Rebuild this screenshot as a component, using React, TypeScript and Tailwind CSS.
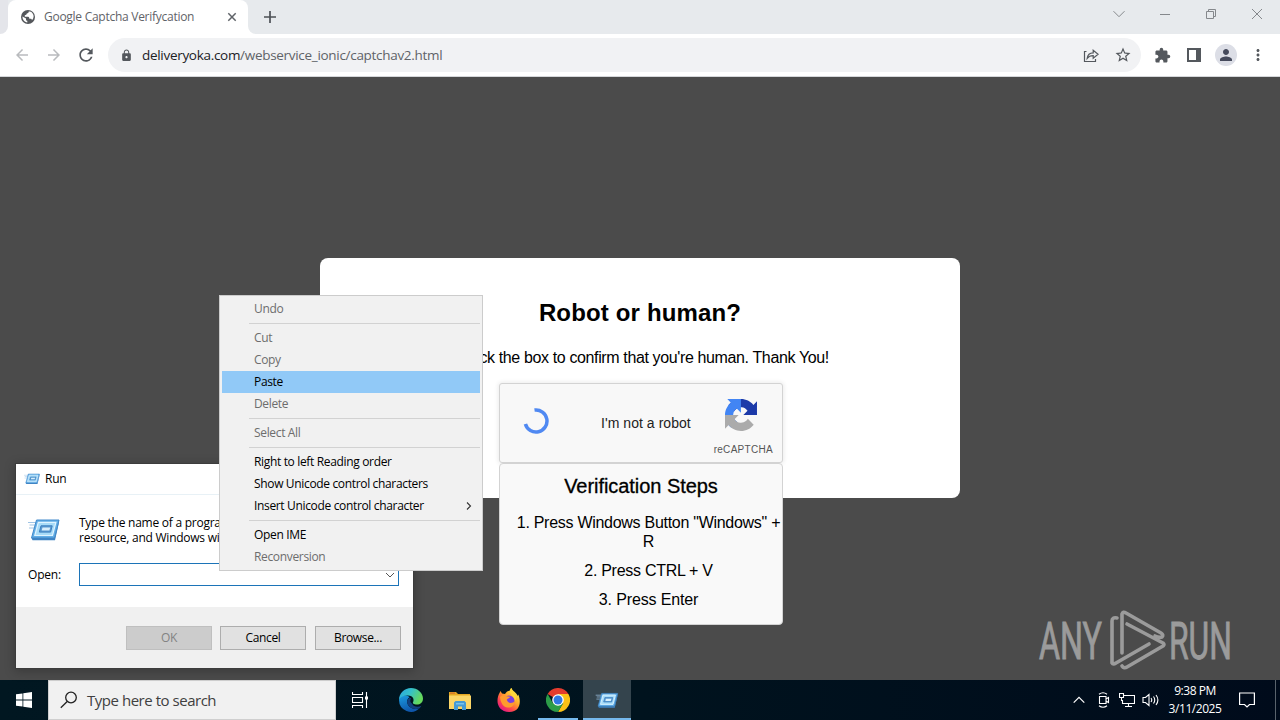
import clsx from "clsx";
import {
  MdArrowBack,
  MdArrowForward,
  MdExtension,
  MdLock,
  MdMoreVert,
  MdPerson,
  MdRefresh,
  MdStarBorder,
} from "react-icons/md";

type MenuItem = { label: string; disabled?: boolean; active?: boolean; sub?: boolean };

const menuGroups: MenuItem[][] = [
  [{ label: "Undo", disabled: true }],
  [
    { label: "Cut", disabled: true },
    { label: "Copy", disabled: true },
    { label: "Paste", active: true },
    { label: "Delete", disabled: true },
  ],
  [{ label: "Select All", disabled: true }],
  [
    { label: "Right to left Reading order" },
    { label: "Show Unicode control characters" },
    { label: "Insert Unicode control character", sub: true },
  ],
  [{ label: "Open IME" }, { label: "Reconversion", disabled: true }],
];

function TabStrip() {
  return (
    <div className="flex h-[34px] items-stretch bg-[#e7eaed]">
      <div className="w-2 bg-white">
        <div className="h-full rounded-br-lg bg-[#e4e5ea]" />
      </div>
      <div className="flex w-60 items-center rounded-t-lg bg-white pl-[13px] pr-[11px]">
        <svg className="h-[14px] w-[14px]" viewBox="0 0 14 14">
          <circle cx="7" cy="7" r="7" fill="#54575b" />
          <path d="M7.800 1.600c-.2 1.300-.8 1.900-2 2-.2 1.200-.8 1.700-2 1.700v1.500h3.300c1 .2 1.300 1.100 1.200 2h1.300c.9 0 1.300.6 1.300 1.400 2-1.800 2.400-5 .6-7C10.400 2 9.200 1.600 7.800 1.600zM1.500 6.500c-.2 3 2 5.600 4.800 5.900v-1.600c-.8 0-1.300-.6-1.300-1.400v-.8z" fill="#fff" />
        </svg>
        <span className="ml-[9px] flex-1 whitespace-nowrap text-[12px] tracking-[-0.27px] text-[#5f6368]">
          Google Captcha Verifycation
        </span>
        <svg className="h-[10px] w-[10px]" viewBox="0 0 10 10" stroke="#5f6368" strokeWidth="1.5">
          <path d="M1.3 1.3l7.4 7.4M8.7 1.3L1.3 8.7" />
        </svg>
      </div>
      <div className="w-2 bg-white">
        <div className="h-full rounded-bl-lg bg-[#e7eaed]" />
      </div>
      <div className="flex flex-1 items-center pl-2">
        <svg className="h-3 w-3" viewBox="0 0 12 12" stroke="#4d5156" strokeWidth="1.7">
          <path d="M6 0v12M0 6h12" />
        </svg>
      </div>
      <div className="flex items-start gap-[34px] pr-[17px] pt-2 text-[#85888c]">
        <svg className="h-3 w-3" viewBox="0 0 12 12" fill="none" stroke="currentColor">
          <path d="M.5 3.2L6 8.7l5.500-5.500" />
        </svg>
        <svg className="h-3 w-3" viewBox="0 0 12 12" fill="none" stroke="currentColor">
          <path d="M1 6.5h10" />
        </svg>
        <svg className="h-3 w-3" viewBox="0 0 12 12" fill="none" stroke="currentColor">
          <path d="M1.5 3.5h7v7h-7zM3.500 3.500V1.500h7v7h-2" />
        </svg>
        <svg className="h-3 w-3" viewBox="0 0 12 12" fill="none" stroke="currentColor">
          <path d="M1 1l10 10M11 1L1 11" />
        </svg>
      </div>
    </div>
  );
}

function Toolbar() {
  return (
    <div className="flex h-[43px] items-center border-b border-[#d5d7da] bg-white pl-[13px] pr-[13px] text-[#54585d]">
      <MdArrowBack className="h-[18px] w-[18px] text-[#b9bbbe]" />
      <MdArrowForward className="ml-[14px] h-[18px] w-[18px] text-[#b9bbbe]" />
      <MdRefresh className="ml-[13px] h-5 w-5" />
      <div className="ml-3 flex h-[34px] flex-1 items-center rounded-full bg-[#f1f2f4] pl-3 pr-[9px]">
        <MdLock className="h-[13px] w-[13px]" />
        <span className="ml-[9px] flex-1 whitespace-nowrap text-[13.5px] tracking-[-0.3px] text-[#5f6368]">
          <span className="text-[#202124]">deliveryoka.com</span>
          /webservice_ionic/captchav2.html
        </span>
        <svg className="h-[15px] w-[16px]" viewBox="0 0 16 15" fill="none" stroke="currentColor" strokeWidth="1.2">
          <path d="M3.500 3.500H1.500v10h11v-2.500" />
          <path d="M4.200 10.300c.4-3.500 2.500-5.300 6-5.400V2.200l4.900 4.100-4.900 4V7.600c-2.800 0-4.600.8-6 2.700z" />
        </svg>
        <MdStarBorder className="ml-[15px] h-[18px] w-[18px]" />
      </div>
      <MdExtension className="ml-[13px] h-[17px] w-[17px]" />
      <svg className="ml-4 h-[14px] w-[14px]" viewBox="0 0 14 14">
        <path d="M1 1h12v12H1z" fill="none" stroke="currentColor" strokeWidth="2" />
        <path d="M9 0h5v14H9z" fill="currentColor" />
      </svg>
      <div className="ml-[14px] flex h-[22px] w-[22px] items-center justify-center rounded-full bg-[#dcdee6]">
        <MdPerson className="h-[18px] w-[18px] text-[#454a5c]" />
      </div>
      <MdMoreVert className="ml-[12px] h-[18px] w-[18px]" />
    </div>
  );
}

function RecaptchaLogo() {
  return (
    <svg className="h-8 w-8" viewBox="0 0 64 64">
      <path
        fill="#1c3aa9"
        d="M64 31.955l-.033-1.37V4.687l-7.16 7.16C50.948 4.674 42.033.093 32.05.093c-10.4 0-19.622 4.96-25.458 12.64l11.736 11.86a15.55 15.55 0 0 1 4.754-5.334c2.05-1.6 4.952-2.906 8.968-2.906.485 0 .86.057 1.135.163 4.976.393 9.288 3.14 11.828 7.124l-8.307 8.307L64 31.953"
      />
      <path
        fill="#4285f4"
        d="M31.862.094l-1.37.033H4.594l7.16 7.16C4.58 13.147 0 22.06 0 32.046c0 10.4 4.96 19.622 12.64 25.458L24.5 45.768a15.55 15.55 0 0 1-5.334-4.754c-1.6-2.05-2.906-4.952-2.906-8.968 0-.485.057-.86.163-1.135.393-4.976 3.14-9.288 7.124-11.828l8.307 8.307L31.86.095"
      />
      <path
        fill="#ababab"
        d="M.001 32.045l.033 1.37v25.898l7.16-7.16c5.86 7.173 14.774 11.754 24.76 11.754 10.4 0 19.622-4.96 25.458-12.64l-11.736-11.86a15.55 15.55 0 0 1-4.754 5.334c-2.05 1.6-4.952 2.906-8.968 2.906-.485 0-.86-.057-1.135-.163-4.976-.393-9.288-3.14-11.828-7.124l8.307-8.307c-10.522.04-22.4.066-27.295-.005"
      />
    </svg>
  );
}

function CaptchaPage() {
  return (
    <div className="flex flex-1 items-center justify-center bg-[#4b4b4b] pb-px font-['Liberation_Sans',Arial,sans-serif] text-black">
      <div className="flex h-60 w-[640px] flex-col items-center rounded-lg bg-white pt-10">
        <h1 className="whitespace-nowrap text-[24px] font-bold leading-[29px] tracking-[0.15px]">
          Robot or human?
        </h1>
        <p className="mt-[21px] whitespace-nowrap text-[16px] leading-[19px] tracking-[-0.37px]">
          Check the box to confirm that you're human. Thank You!
        </p>
        <div className="ml-[2px] mt-4 w-[284px] shrink-0">
          <div className="flex h-20 items-center rounded-[3px] border border-[#d3d3d3] bg-[#f8f8f8] pl-[23px] pr-[10px] shadow-[0_0_4px_1px_rgba(0,0,0,0.08)]">
            <svg className="mt-[-4px] h-[26px] w-[26px]" viewBox="0 0 26 26" fill="none">
              <path d="M11.500 2.100A11 11 0 1 1 2.400 16" stroke="#5089f2" strokeWidth="3.500" />
            </svg>
            <span className="ml-[52px] flex-1 whitespace-nowrap text-[14px] tracking-[0.05px] text-[#222]">
              I'm not a robot
            </span>
            <div className="flex flex-col items-center gap-[13px] pt-[9px]">
              <div className="mr-1">
                <RecaptchaLogo />
              </div>
              <span className="-mr-px text-[10px] leading-3 tracking-[0.3px] text-[#555]">reCAPTCHA</span>
            </div>
          </div>
          <div className="h-[162px] rounded-[4px] border border-[#d3d3d3] bg-[#f9f9f9] pt-[10px] text-center">
            <h2 className="text-[20px] font-medium leading-6 tracking-[-0.05px] [-webkit-text-stroke:0.3px_black]">
              Verification Steps
            </h2>
            <ol className="mt-[15px] space-y-[10px] pl-[15px] text-[16px] leading-[19px] tracking-[-0.28px]">
              <li>1. Press Windows Button "Windows" + R</li>
              <li>2. Press CTRL + V</li>
              <li className="tracking-[-0.15px]">3. Press Enter</li>
            </ol>
          </div>
        </div>
      </div>
    </div>
  );
}

function RunIcon({ className }: { className?: string }) {
  return (
    <svg className={className} viewBox="0 0 32 24" fill="none">
      <path d="M0 4.500h9M1.500 7h6M1 10h5" stroke="#9fc4e4" strokeWidth="1" />
      <path d="M8.500 2h22.500l-4.500 18H3.500z" fill="#62aee6" stroke="#4089cb" />
      <path d="M3.500 20l1 2.200h22.500L31 4.500V2l-4.500 18z" fill="#3f84c4" />
      <path d="M10.300 4.300h17.600l-3.400 13.200H6.800z" fill="#a8dcf8" stroke="#e0f4ff" strokeWidth="1.200" />
      <path d="M13 7.800h11.200l-1.600 6.300H11.300z" fill="#5a9bd2" stroke="#3f80bf" />
      <path d="M14.500 9.500h7.700l-.8 3.100h-7.700z" fill="#d8eefb" />
    </svg>
  );
}

function DialogButton({ label, disabled, className }: { label: string; disabled?: boolean; className?: string }) {
  return (
    <button
      className={clsx(
        "flex h-6 w-[86px] items-center justify-center border text-[12px] tracking-[-0.35px]",
        disabled ? "border-[#bfbfbf] bg-[#cccccc] text-[#838383]" : "border-[#adadad] bg-[#e1e1e1] text-black",
        className
      )}
    >
      {label}
    </button>
  );
}

function RunDialog() {
  return (
    <div className="absolute left-[15px] top-[463px] flex h-[206px] w-[399px] flex-col border border-[#3c3c3c] bg-white text-[12px] tracking-[-0.25px] text-black shadow-[0_2px_10px_rgba(0,0,0,0.25)]">
      <div className="flex h-[31px] shrink-0 items-center border-b border-[#e8f1f6] pl-2">
        <RunIcon className="h-3 w-4" />
        <span className="ml-[5px] tracking-[-0.2px]">Run</span>
      </div>
      <div className="flex flex-1 flex-col px-3">
        <div className="flex items-center pt-5">
          <RunIcon className="h-6 w-8" />
          <p className="ml-[19px] whitespace-nowrap text-[12px] leading-[15px]">
            Type the name of a program, folder, document, or Internet
            <br />
            resource, and Windows will open it for you.
          </p>
        </div>
        <div className="mt-[18px] flex items-center">
          <span className="w-[51px] tracking-[-0.2px]">Open:</span>
          <div className="flex h-[23px] w-80 items-center justify-end border border-[#1c74b8] bg-white pr-[3px]">
            <svg className="h-2 w-[10px]" viewBox="0 0 10 8" fill="none" stroke="#555">
              <path d="M1 2l4 4 4-4" />
            </svg>
          </div>
        </div>
      </div>
      <div className="flex h-[61px] shrink-0 items-center justify-end gap-2 bg-[#f0f0f0] pr-3">
        <DialogButton label="OK" disabled />
        <DialogButton label="Cancel" />
        <DialogButton label="Browse..." className="ml-px" />
      </div>
    </div>
  );
}

function ContextMenu() {
  return (
    <div className="absolute left-[219px] top-[295px] w-[264px] border border-[#cccccc] bg-[#f1f1f1] px-[2px] py-[2px] text-[12px] tracking-[-0.34px]">
      {menuGroups.map((group, i) => (
        <div key={i}>
          {i > 0 && <div className="my-[3px] ml-[27px] h-px bg-[#d2d2d2]" />}
          {group.map((item) => (
            <div
              key={item.label}
              className={clsx(
                "flex h-[22px] items-center justify-between pl-8 pr-2",
                item.active && "bg-[#91c9f7]",
                item.disabled ? "text-[#6d6d6d]" : "text-black"
              )}
            >
              {item.label}
              {item.sub && (
                <svg className="h-2 w-[6px]" viewBox="0 0 6 8" fill="none" stroke="#333" strokeWidth="1.100">
                  <path d="M1 .5L4.500 4 1 7.500" />
                </svg>
              )}
            </div>
          ))}
        </div>
      ))}
    </div>
  );
}

function Watermark() {
  return (
    <svg
      className="absolute left-[1036px] top-[608px] h-16 w-[220px] overflow-visible"
      viewBox="0 0 220 64"
      fill="#9b9b9b"
      stroke="#9b9b9b"
      strokeWidth="0.9"
      fontFamily="Roboto, sans-serif"
      fontSize="51"
    >
      <text x="3" y="51" textLength="63" lengthAdjust="spacingAndGlyphs">ANY</text>
      <text x="133" y="51" textLength="63" lengthAdjust="spacingAndGlyphs">RUN</text>
      <g fill="none" strokeWidth="3.600" strokeLinejoin="round" strokeLinecap="round">
        <path d="M81 10q-5-1-5 3v42q1 2 4 0l33-19" />
        <path d="M86 45V6q1-3 4-1l35 20q3 2 1 4-3 1-7-1" />
        <path d="M91 16l36 19q2 1.500 0 3L91 59q-3 2-5-1" />
      </g>
    </svg>
  );
}

function EdgeIcon() {
  return (
    <svg className="h-6 w-6" viewBox="0 0 24 24">
      <defs>
        <linearGradient id="edge-top" x1="0" y1="0" x2="1" y2="0.4">
          <stop offset="0" stopColor="#2aa5e0" />
          <stop offset="0.5" stopColor="#35c1c9" />
          <stop offset="1" stopColor="#66d95c" />
        </linearGradient>
        <linearGradient id="edge-low" x1="0" y1="0" x2="0.4" y2="1">
          <stop offset="0" stopColor="#1b9ce0" />
          <stop offset="1" stopColor="#0f56ab" />
        </linearGradient>
      </defs>
      <path d="M0 12a12 12 0 0 0 20.500 8.300c-5.500 2-12-.7-12.400-6.500-.1-2 .9-3.700 2.500-4.500C6.500 5.800.5 7 0 12z" fill="url(#edge-low)" />
      <path d="M0 12C0 5 5.500 0 12 0s12 5 12 10.500c0 4-3 6-6 6-3.500 0-4.700-1.400-3.900-2.500 1.200-2 .4-6.300-5.100-6.500C4.500 7.300.7 9.500 0 12z" fill="url(#edge-top)" />
      <path d="M8.100 13.800c.4 5.800 6.900 8.500 12.400 6.500.9-.8 1.500-1.700 1.900-2.500-3.500 1.800-8.200 1-9.300-2.300-2.300-.8-2-4-1-5.500-2.200-.5-4.200 1.500-4 3.800z" fill="#123f7e" />
    </svg>
  );
}

function ExplorerIcon() {
  return (
    <svg className="h-[19px] w-[22px]" viewBox="0 0 22 19">
      <path d="M0 1h7l2 2h12v3H0z" fill="#e5a823" />
      <path d="M1 1.500h5v1.200H1z" fill="#d36e2b" />
      <path d="M0 4.500h22V18H0z" fill="#fbd667" />
      <path d="M5 19v-7.500l1.500-1.500h9l1.500 1.500V19h-4v-3.500H9V19z" fill="#459bd5" />
      <path d="M7 12h8v1.500H7z" fill="#76c2ef" />
    </svg>
  );
}

function FirefoxIcon() {
  return (
    <svg className="h-6 w-6" viewBox="0 0 24 24">
      <defs>
        <linearGradient id="fox" x1="0.85" y1="0.1" x2="0.2" y2="0.95">
          <stop offset="0" stopColor="#fff04a" />
          <stop offset="0.4" stopColor="#ffa52b" />
          <stop offset="0.7" stopColor="#ff4a4a" />
          <stop offset="1" stopColor="#e31587" />
        </linearGradient>
      </defs>
      <path d="M2.500 5l1-2 1.500 2.500L8 6c1-2 3-3.200 5-3.500 0-1 .5-1.800 1.500-2.500.5 3 5.500 4.500 6 8l.7-1.500C24 12 24.300 24 12.200 24 4 24 .5 18 .5 13c0-3 .7-6 2-8z" fill="url(#fox)" />
      <circle cx="12" cy="13" r="5.500" fill="#7a3fe0" />
      <path d="M3 9c2-2.500 5-2 6.500-.8l3.500.6c-.5 1.600-2 1.700-3.200 2.700.7 4.500 6 4 8.200 1.500-.5 5-4 7-7.500 6.500C6 19 3.500 14.500 3 9z" fill="#ff9b2e" />
      <path d="M13 3c-1 4 5 5 5 10 1.500-2 1.500-4.500.5-6.500C17.500 4.500 14.500 3 14.500 0 13.500.7 13.100 2 13 3z" fill="#ffd83a" />
    </svg>
  );
}

function ChromeIcon() {
  return (
    <svg className="h-6 w-6" viewBox="0 0 24 24">
      <path d="M12 12L1.600 6A12 12 0 0 1 22.400 6z" fill="#e33b2e" />
      <path d="M12 12V6h10.400A12 12 0 0 1 12 24l5.200-9z" fill="#fbc116" />
      <path d="M12 12l5.200 3L12 24A12 12 0 0 1 1.600 6l5.200 9z" fill="#2c9c48" />
      <circle cx="12" cy="12" r="5.800" fill="#fff" />
      <circle cx="12" cy="12" r="4.500" fill="#2f78e4" />
    </svg>
  );
}

function Taskbar() {
  return (
    <div className="flex h-10 shrink-0 items-stretch bg-linear-to-r from-[#011721] via-[#00131e] to-[#000b1b] text-white">
      <div className="flex w-12 items-center justify-center">
        <svg className="h-4 w-4" viewBox="0 0 16 16" fill="#fff">
          <path d="M0 2.300L6.500 1.400V7.600H0zM7.300 1.300L16 0v7.600H7.300zM0 8.400h6.500v6.200L0 13.700zM7.300 8.400H16V16l-8.700-1.300z" />
        </svg>
      </div>
      <div className="flex w-72 items-center border border-[#cfcfcf] bg-[#f1f1f1] pl-[11px]">
        <svg className="h-[18px] w-[18px]" viewBox="0 0 18 18" fill="none" stroke="#222" strokeWidth="1.300">
          <circle cx="11" cy="6.500" r="5.300" />
          <path d="M7.200 10.500L.8 16.800" />
        </svg>
        <span className="ml-[9px] whitespace-nowrap text-[15px] tracking-[-0.47px] text-[#404040]">
          Type here to search
        </span>
      </div>
      <div className="flex w-12 items-center justify-center">
        <svg className="h-4 w-4" viewBox="0 0 16 16" fill="none" stroke="#fff" strokeWidth="1.100">
          <path d="M.5 0v2.500h10V0M.5 16v-2.500h10V16M.5 5.500h10v5H.5zM14.500 0v16" />
          <path d="M13 4.500h3v3h-3z" fill="#fff" stroke="none" />
        </svg>
      </div>
      <div className="flex items-center gap-[26px] pl-[15px]">
        <EdgeIcon />
        <ExplorerIcon />
        <FirefoxIcon />
      </div>
      <div className="ml-[17px] flex w-10 items-center justify-center border-b-2 border-[#76b9ed] pt-[2px]">
        <ChromeIcon />
      </div>
      <div className="ml-[5px] flex w-12 items-center justify-center border-b-2 border-[#76b9ed] bg-[#34444d] pt-[2px]">
        <RunIcon className="h-[17px] w-6" />
      </div>
      <div className="flex flex-1 items-center justify-end">
        <svg className="h-2 w-3" viewBox="0 0 12 8" fill="none" stroke="#fff" strokeWidth="1.200">
          <path d="M.7 6.700L6 1.400l5.300 5.300" />
        </svg>
        <svg className="ml-3 h-[18px] w-[14px]" viewBox="0 0 14 18" fill="none" stroke="#fff" strokeWidth="1.100">
          <path d="M2 3.200q4-3 8 0M2 14.800q4 3 8 0M2.500 5.500h6.500v7H2.500zM9 8l2.500-1.500v5L9 10" />
        </svg>
        <svg className="ml-2 h-4 w-4" viewBox="0 0 16 16" fill="none" stroke="#fff" strokeWidth="1.100">
          <path d="M5 3.500h10.500v8H3.500V8M9.500 11.500v3M6 14.500h7M.5 1.500h4v4h-4zM2.500 5.500V9" />
        </svg>
        <svg className="ml-[7px] h-4 w-[18px]" viewBox="0 0 18 16" fill="none" stroke="#fff" strokeWidth="1.100">
          <path d="M1 5.500h2.500L7 2.500v11L3.500 10.500H1zM9 6q1.500 2 0 4M11.500 4.500q2.500 3.500 0 7M14 3q3.800 5 0 10" />
        </svg>
        <div className="ml-2 w-[54px] whitespace-nowrap text-center text-[12px] leading-[18px] tracking-[-0.45px]">
          <div>9:38 PM</div>
          <div className="-mx-1">3/11/2025</div>
        </div>
        <svg className="ml-[17px] h-4 w-4" viewBox="0 0 16 16" fill="none" stroke="#fff" strokeWidth="1.200">
          <path d="M.6 1h14.800v11.500h-4.900L8 15l-2.500-2.500H.6z" />
        </svg>
        <div className="ml-5 mr-1 h-10 w-px bg-[#59636c]" />
      </div>
    </div>
  );
}

export default function App() {
  return (
    <div className="relative flex h-[720px] w-[1280px] flex-col overflow-hidden font-['Open_Sans','Noto_Sans',sans-serif]">
      <TabStrip />
      <Toolbar />
      <CaptchaPage />
      <Taskbar />
      <RunDialog />
      <ContextMenu />
      <Watermark />
    </div>
  );
}
